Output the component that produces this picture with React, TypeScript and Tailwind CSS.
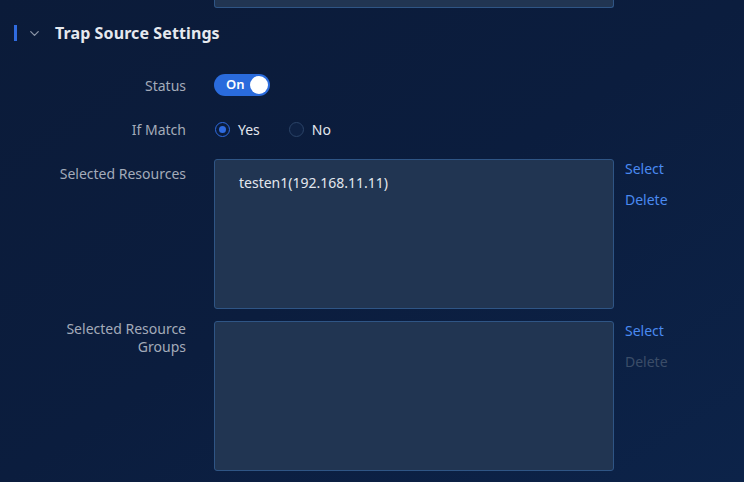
import { ChevronDown } from "lucide-react";

const font = { fontFamily: '"Noto Sans", "Open Sans", sans-serif' };

function Label({ children, className = "" }: { children: React.ReactNode; className?: string }) {
  return (
    <div className={`w-[186px] shrink-0 text-right text-[14px] text-[#a3abb9] ${className}`}>{children}</div>
  );
}

function ResourceBox({ items }: { items: string[] }) {
  return (
    <div className="ml-[28px] h-[150px] w-[400px] shrink-0 rounded-[3px] border border-[#2f5585] bg-[#213552] px-[24px] py-[13px]">
      {items.map((item) => (
        <div key={item} className="text-[14px] leading-[20px] text-[#e3e7ee]">
          {item}
        </div>
      ))}
    </div>
  );
}

function Actions({ canDelete }: { canDelete: boolean }) {
  return (
    <div className="ml-[11px] flex flex-col gap-[11px] text-[14px] leading-[20px]">
      <button className="text-left text-[#4a8af0]">Select</button>
      <button className={`text-left ${canDelete ? "text-[#4a8af0]" : "text-[#3b4d68]"}`}>Delete</button>
    </div>
  );
}

export default function App() {
  return (
    <div
      className="h-[482px] w-[744px] overflow-hidden bg-gradient-to-br from-[#0b1b39] via-[#0b1d3e] to-[#0c2349]"
      style={font}
    >
      {/* tail of the section above */}
      <div className="ml-[214px] h-[8px] w-[400px] rounded-b-[3px] border-x border-b border-[#2f5585] bg-[#213552]" />

      {/* section header */}
      <div className="mt-[15px] flex h-[20px] items-center">
        <div className="ml-[14px] h-[16px] w-[3px] bg-[#2f6be0]" />
        <ChevronDown className="ml-[10px] text-[#8b95a7]" size={15} strokeWidth={2} />
        <div className="ml-[13px] text-[16px] font-bold tracking-[0.1px] text-[#e6e9ef]">Trap Source Settings</div>
      </div>

      {/* status */}
      <div className="mt-[31px] flex h-[22px] items-center">
        <Label>Status</Label>
        <div className="ml-[28px] flex h-[22px] w-[56px] items-center justify-between rounded-full bg-[#2a6bdc] pl-[12px] pr-[2px]">
          <span className="text-[13px] font-semibold text-white">On</span>
          <span className="h-[18px] w-[18px] rounded-full bg-white" />
        </div>
      </div>

      {/* if match */}
      <div className="mt-[22px] flex h-[22px] items-center">
        <Label>If Match</Label>
        <div className="ml-[29px] flex items-center text-[14px] text-[#e3e7ee]">
          <span className="flex h-[15px] w-[15px] items-center justify-center rounded-full border border-[#2f6be0]">
            <span className="h-[7px] w-[7px] rounded-full bg-[#2f6be0]" />
          </span>
          <span className="ml-[8px]">Yes</span>
          <span className="ml-[29px] h-[15px] w-[15px] rounded-full border border-[#2b4468] bg-[#0e2143]" />
          <span className="ml-[8px]">No</span>
        </div>
      </div>

      {/* selected resources */}
      <div className="mt-[19px] flex items-start">
        <Label className="pt-[5px] leading-[20px]">Selected Resources</Label>
        <ResourceBox items={["testen1(192.168.11.11)"]} />
        <Actions canDelete />
      </div>

      {/* selected resource groups */}
      <div className="mt-[12px] flex items-start">
        <Label className="-mt-[1px] leading-[18px]">
          Selected Resource
          <br />
          Groups
        </Label>
        <ResourceBox items={[]} />
        <Actions canDelete={false} />
      </div>
    </div>
  );
}
